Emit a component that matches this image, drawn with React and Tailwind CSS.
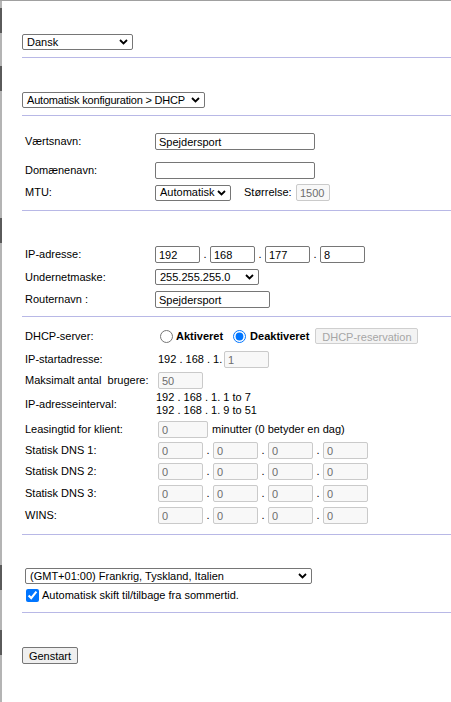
import React from "react";

const Chevron = () => (
  <svg width="9" height="6" viewBox="0 0 9 6" className="shrink-0">
    <path d="M1 1 L4.5 4.5 L8 1" fill="none" stroke="#000" strokeWidth="1.8" />
  </svg>
);

const Select = ({ className, textClass = "", children }) => (
  <div
    className={`flex items-center justify-between h-[16px] border border-[#767676] rounded-[2px] bg-white pl-[4px] pr-[4px] text-[11px] text-black whitespace-nowrap ${className}`}
  >
    <span className={textClass}>{children}</span>
    <Chevron />
  </div>
);

const Input = ({ className, value, disabled }) => (
  <input
    type="text"
    readOnly
    defaultValue={value}
    disabled={disabled}
    className={`h-[17px] rounded-[2px] border px-[3px] text-[11px] outline-none ${
      disabled
        ? "bg-[#f8f8f8] border-[#cacaca] text-[#6d6d6d]"
        : "bg-white border-[#767676] text-black"
    } ${className}`}
  />
);

const Quad = ({ values, disabled }) => (
  <div className="flex items-center">
    {values.map((v, i) => (
      <React.Fragment key={i}>
        {i > 0 && <span className="w-[10px] text-center">.</span>}
        <Input className="w-[45px]" value={v} disabled={disabled} />
      </React.Fragment>
    ))}
  </div>
);

const Rule = ({ className = "" }) => <div className={`h-px bg-[#b8b8e6] ${className}`} />;

const Row = ({ label, className = "", col = "w-[130px]", children }) => (
  <div className={`flex items-center pl-[3px] ${className}`}>
    <span className={`${col} shrink-0`}>{label}</span>
    {children}
  </div>
);

export default function App() {
  const dhcp = "w-[133px]";
  return (
    <div className="flex min-h-[702px] border-t border-[#a0a0a0] bg-white text-[11px] text-black font-['Liberation_Sans',Arial,sans-serif]">
      {/* left frame edge */}
      <div className="flex w-[2px] shrink-0 flex-col">
        <div className="h-[7px] bg-[#b4b4b4]" />
        <div className="h-[25px] bg-[#5a5a5a]" />
        <div className="h-[33px] bg-[#b4b4b4]" />
        <div className="h-[25px] bg-[#5a5a5a]" />
        <div className="h-[127px] bg-[#b4b4b4]" />
        <div className="h-[25px] bg-[#5a5a5a]" />
        <div className="h-[322px] bg-[#b4b4b4]" />
        <div className="h-[25px] bg-[#5a5a5a]" />
        <div className="h-[40px] bg-[#b4b4b4]" />
        <div className="h-[25px] bg-[#5a5a5a]" />
        <div className="flex-1 bg-[#b4b4b4]" />
      </div>

      <div className="flex-1 pl-[20px]">
        {/* language */}
        <div className="pt-[33px]">
          <Select className="w-[111px]">Dansk</Select>
        </div>
        <Rule className="mt-[7px]" />

        {/* connection type */}
        <div className="pt-[34px]">
          <Select className="w-[183px]" textClass="tracking-[-0.2px]">
            Automatisk konfiguration &gt; DHCP
          </Select>
        </div>
        <Rule className="mt-[7px]" />

        {/* host */}
        <Row label="Værtsnavn:" className="mt-[17px] h-[17px]">
          <Input className="w-[160px]" value="Spejdersport" />
        </Row>
        <Row label="Domænenavn:" className="mt-[12px] h-[17px]">
          <Input className="w-[160px]" value="" />
        </Row>
        <Row label="MTU:" className="mt-[5px] h-[17px]">
          <Select className="w-[76px]">Automatisk</Select>
          <span className="ml-[13px] w-[52px]">Størrelse:</span>
          <Input className="w-[34px]" value="1500" disabled />
        </Row>
        <Rule className="mt-[9px]" />

        {/* lan */}
        <Row label="IP-adresse:" className="mt-[35px] h-[17px]">
          <Quad values={["192", "168", "177", "8"]} />
        </Row>
        <Row label="Undernetmaske:" className="mt-[6px] h-[16px]">
          <Select className="w-[104px]">255.255.255.0</Select>
        </Row>
        <Row label="Routernavn :" className="mt-[6px] h-[17px]">
          <Input className="w-[115px]" value="Spejdersport" />
        </Row>
        <Rule className="mt-[8px]" />

        {/* dhcp */}
        <Row label="DHCP-server:" col={dhcp} className="mt-[11px] h-[16px]">
          <input type="radio" name="dhcp" className="m-0 ml-[2px] h-[13px] w-[13px]" />
          <span className="ml-[3px] font-bold">Aktiveret</span>
          <input type="radio" name="dhcp" defaultChecked className="m-0 ml-[10px] h-[13px] w-[13px]" />
          <span className="ml-[4px] font-bold">Deaktiveret</span>
          <button
            disabled
            className="ml-[6px] h-[16px] w-[103px] rounded-[2px] border border-[#cfcfcf] bg-[#f3f3f3] text-[11px] text-[#a6a6a6]"
          >
            DHCP-reservation
          </button>
        </Row>
        <Row label="IP-startadresse:" col={dhcp} className="mt-[7px] h-[17px]">
          <span className="w-[66px]">192 . 168 . 1.</span>
          <Input className="w-[45px]" value="1" disabled />
        </Row>
        <Row label="Maksimalt antal  brugere:" col={dhcp} className="mt-[4px] h-[17px] whitespace-pre">
          <Input className="w-[45px]" value="50" disabled />
        </Row>
        <Row label="IP-adresseinterval:" col={dhcp} className="mt-[2px] h-[26px]">
          <div className="-ml-[2px] flex flex-col leading-[13px]">
            <span>192 . 168 . 1. 1 to 7</span>
            <span>192 . 168 . 1. 9 to 51</span>
          </div>
        </Row>
        <Row label="Leasingtid for klient:" col={dhcp} className="mt-[4px] h-[17px]">
          <Input className="w-[50px]" value="0" disabled />
          <span className="ml-[4px]">minutter (0 betyder en dag)</span>
        </Row>
        <Row label="Statisk DNS 1:" col={dhcp} className="mt-[4px] h-[17px]">
          <Quad values={["0", "0", "0", "0"]} disabled />
        </Row>
        <Row label="Statisk DNS 2:" col={dhcp} className="mt-[4px] h-[17px]">
          <Quad values={["0", "0", "0", "0"]} disabled />
        </Row>
        <Row label="Statisk DNS 3:" col={dhcp} className="mt-[5px] h-[17px]">
          <Quad values={["0", "0", "0", "0"]} disabled />
        </Row>
        <Row label="WINS:" col={dhcp} className="mt-[5px] h-[17px]">
          <Quad values={["0", "0", "0", "0"]} disabled />
        </Row>
        <Rule className="mt-[10px]" />

        {/* time zone */}
        <div className="mt-[33px] pl-[3px]">
          <Select className="w-[287px]">(GMT+01:00) Frankrig, Tyskland, Italien</Select>
        </div>
        <label className="mt-[5px] flex h-[13px] items-center">
          <input type="checkbox" defaultChecked className="m-0 ml-[4px] h-[13px] w-[13px]" />
          <span className="ml-[3px]">Automatisk skift til/tilbage fra sommertid.</span>
        </label>
        <Rule className="mt-[10px]" />

        <div className="mt-[34px]">
          <button className="h-[17px] w-[56px] rounded-[2px] border border-[#767676] bg-[#efefef] text-[11px] text-black">
            Genstart
          </button>
        </div>
      </div>
    </div>
  );
}
